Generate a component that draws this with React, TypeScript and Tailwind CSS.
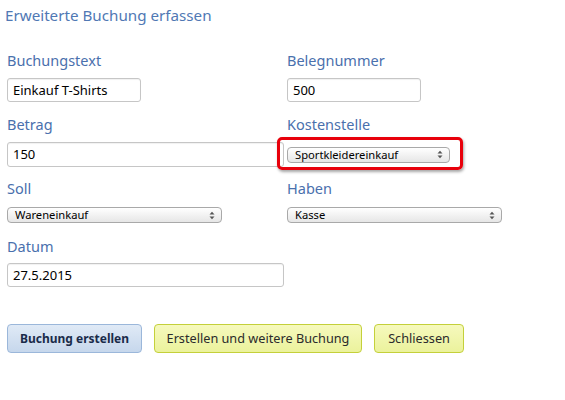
import React from "react";

const font = { fontFamily: '"Noto Sans", "Open Sans", Arial, sans-serif' };

function Label({ children }: { children: React.ReactNode }) {
  return <div className="h-[20px] text-[14.5px] leading-[20px] text-[#4a70ad]">{children}</div>;
}

function TextInput({ value, w }: { value: string; w: string }) {
  return (
    <div
      className={`${w} h-[24px] rounded-[3px] border border-[#c6c6c6] bg-white pl-[5px] text-[13px] leading-[22px] text-black shadow-[inset_0_1px_1px_rgba(0,0,0,0.06)]`}
    >
      {value}
    </div>
  );
}

function Select({ value, w }: { value: string; w: string }) {
  return (
    <div
      className={`${w} flex h-[16px] items-center justify-between rounded-[4px] border border-[#a9a9a9] bg-gradient-to-b from-white to-[#e6e6e6] pl-[7px] pr-[6px] text-[11.2px] leading-[14px] text-black`}
    >
      <span>{value}</span>
      <svg width="6" height="9" viewBox="0 0 6 9">
        <path d="M0.5 3.5 L3 0.8 L5.5 3.5 Z" fill="#555" />
        <path d="M0.5 5.5 L3 8.2 L5.5 5.5 Z" fill="#555" />
      </svg>
    </div>
  );
}

export default function App() {
  return (
    <div className="h-[400px] w-[565px] bg-white" style={font}>
      <div className="pl-[5px] pt-[5px] text-[15.2px] leading-[20px] text-[#5078b4]">Erweiterte Buchung erfassen</div>
      <div className="grid grid-cols-[280px_1fr] pl-[7px] pt-[25px]">
        <div>
          <Label>Buchungstext</Label>
          <div className="mt-[8px]">
            <TextInput value="Einkauf T-Shirts" w="w-[134px]" />
          </div>
        </div>
        <div>
          <Label>Belegnummer</Label>
          <div className="mt-[8px]">
            <TextInput value="500" w="w-[134px]" />
          </div>
        </div>

        <div className="mt-[12px]">
          <Label>Betrag</Label>
          <div className="mt-[8px]">
            <TextInput value="150" w="w-[277px] h-[25px]" />
          </div>
        </div>
        <div className="mt-[12px]">
          <Label>Kostenstelle</Label>
          <div className="relative mt-[8px] flex h-[25px] items-center">
            <Select value="Sportkleidereinkauf" w="w-[163px]" />
            <div className="pointer-events-none absolute left-[-10px] top-[-5px] h-[33px] w-[186px] rounded-[5px] border-[3px] border-[#e8000b] shadow-[1px_2px_3px_rgba(0,0,0,0.35)]" />
          </div>
        </div>

        <div className="mt-[11px]">
          <Label>Soll</Label>
          <div className="mt-[9px]">
            <Select value="Wareneinkauf" w="w-[215px]" />
          </div>
        </div>
        <div className="mt-[11px]">
          <Label>Haben</Label>
          <div className="mt-[9px]">
            <Select value="Kasse" w="w-[215px]" />
          </div>
        </div>

        <div className="col-span-2 mt-[13px]">
          <Label>Datum</Label>
          <div className="mt-[7px]">
            <TextInput value="27.5.2015" w="w-[277px]" />
          </div>
        </div>
      </div>

      <div className="mt-[37px] flex gap-[12px] pl-[7px]">
        <button className="h-[29px] w-[135px] rounded-[4px] border border-[#9bb7da] bg-gradient-to-b from-[#e0eaf6] to-[#c6d7ec] text-[12px] font-bold text-[#1a2b4a]">
          Buchung erstellen
        </button>
        <button className="h-[29px] w-[208px] rounded-[4px] border border-[#c4d03a] bg-gradient-to-b from-[#f6f9bd] to-[#ebf29c] text-[12.7px] text-[#2b2b2b]">
          Erstellen und weitere Buchung
        </button>
        <button className="h-[29px] w-[90px] rounded-[4px] border border-[#c4d03a] bg-gradient-to-b from-[#f6f9bd] to-[#ebf29c] text-[12.7px] text-[#2b2b2b]">
          Schliessen
        </button>
      </div>
    </div>
  );
}
